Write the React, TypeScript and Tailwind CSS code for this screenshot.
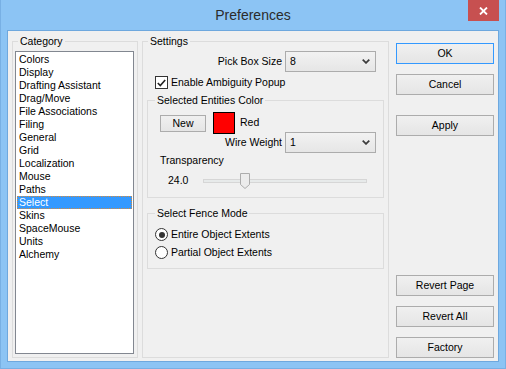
import React from 'react';

const categories = [
  'Colors', 'Display', 'Drafting Assistant', 'Drag/Move', 'File Associations', 'Filing',
  'General', 'Grid', 'Localization', 'Mouse', 'Paths', 'Select', 'Skins', 'SpaceMouse',
  'Units', 'Alchemy',
];

function Combo({ value }: { value: string }) {
  return (
    <div className="flex h-[21px] w-[91px] items-center justify-between border border-[#acacac] bg-linear-to-b from-[#f2f2f2] to-[#e6e6e6] pl-[4px] pr-[5px]">
      <span>{value}</span>
      <svg width="8" height="5" viewBox="0 0 8 5">
        <path d="M0.7 0.6 L4 3.9 L7.3 0.6" fill="none" stroke="#3c3c3c" strokeWidth="1.7" />
      </svg>
    </div>
  );
}

function Btn({ label, focused = false, className = '' }: { label: string; focused?: boolean; className?: string }) {
  return (
    <button
      className={`h-[21px] w-[98px] border bg-linear-to-b from-[#f0f0f0] to-[#e5e5e5] text-black ${
        focused ? 'border-[#3399ff]' : 'border-[#acacac]'
      } ${className}`}
    >
      {label}
    </button>
  );
}

function Radio({ checked }: { checked: boolean }) {
  return (
    <span className="flex h-[13px] w-[13px] items-center justify-center rounded-full border border-[#333] bg-white">
      {checked && <span className="h-[6px] w-[6px] rounded-full bg-[#333]" />}
    </span>
  );
}

export default function App() {
  return (
    <div className="flex h-[369px] w-[506px] flex-col border-x border-b border-[#78b0e4] bg-[#8cc4f4] font-['Liberation_Sans',Arial,sans-serif] text-[10.5px] text-black">
      {/* title bar */}
      <header className="grid h-[30px] shrink-0 grid-cols-[1fr_auto_1fr]">
        <div />
        <div className="pt-[6px] text-[14px] leading-[18px] text-[#2b2b2b]">Preferences</div>
        <div className="flex justify-end pr-[6px]">
          <div className="flex h-[21px] w-[31px] items-center justify-center bg-[#c75050]">
            <svg width="9" height="8" viewBox="0 0 9 8">
              <path d="M1 0.5 L8 7.5 M8 0.5 L1 7.5" stroke="#fff" strokeWidth="1.8" />
            </svg>
          </div>
        </div>
      </header>

      {/* client */}
      <div className="mx-[6px] flex h-[332px] border border-[#6ea8de] bg-[#f0f0f0] pt-[3px] pl-[4px]">
        {/* category */}
        <fieldset className="h-[324px] w-[126px] border border-[#dcdcdc]">
          <legend className="ml-[5px] px-[2px] leading-[14px]">Category</legend>
          <div className="mt-[3px] ml-[2px] h-[303px] w-[119px] border border-[#828790] bg-white p-[1px]">
            {categories.map(c => (
              <div
                key={c}
                className={`h-[13px] border pl-[1px] leading-[11px] whitespace-nowrap ${
                  c === 'Select'
                    ? 'border-dotted border-[#d58a3c] bg-[#3399ff] text-white'
                    : 'border-transparent'
                }`}
              >
                {c}
              </div>
            ))}
          </div>
        </fieldset>

        {/* settings */}
        <fieldset className="ml-[4px] h-[324px] w-[247px] border border-[#dcdcdc]">
          <legend className="ml-[5px] px-[2px] leading-[14px]">Settings</legend>
          <div className="flex flex-col px-[4px]">
            <div className="mt-[3px] flex h-[21px] items-center justify-end gap-[3px] pr-[8px]">
              <span>Pick Box Size</span>
              <Combo value="8" />
            </div>

            <div className="mt-[4px] flex h-[13px] items-center gap-[3px] pl-[8px]">
              <span className="flex h-[13px] w-[13px] items-center justify-center border border-[#333] bg-white">
                <svg width="9" height="8" viewBox="0 0 9 8">
                  <path d="M0.8 4 L3.3 6.6 L8.2 1" fill="none" stroke="#222" strokeWidth="1.6" />
                </svg>
              </span>
              <span>Enable Ambiguity Popup</span>
            </div>

            <fieldset className="mt-[4px] h-[105px] border border-[#dcdcdc]">
              <legend className="ml-[7px] px-[2px] leading-[14px]">Selected Entities Color</legend>
              <div className="flex flex-col">
                <div className="mt-[5px] flex h-[22px] items-center pl-[12px]">
                  <button className="h-[17px] w-[46px] border border-[#acacac] bg-linear-to-b from-[#f0f0f0] to-[#e5e5e5]">
                    New
                  </button>
                  <span className="ml-[7px] h-[22px] w-[22px] border border-black bg-[#ff0000]" />
                  <span className="ml-[5px]">Red</span>
                </div>
                <div className="mt-[-2px] flex h-[21px] items-center justify-end gap-[3px] pr-[7px]">
                  <span>Wire Weight</span>
                  <Combo value="1" />
                </div>
                <div className="mt-[1px] pl-[12px] leading-[13px]">Transparency</div>
                <div className="mt-[6px] flex h-[16px] items-center pl-[20px]">
                  <span>24.0</span>
                  <div className="relative ml-[15px] flex h-[16px] w-[164px] items-center">
                    <div className="h-[4px] w-full border border-[#d6d6d6] bg-[#e7eaea]" />
                    <svg className="absolute top-0 left-[37px]" width="10" height="16" viewBox="0 0 10 16">
                      <path d="M0.5 0.5 H9.5 V11.5 L5 15.5 L0.5 11.5 Z" fill="#ececec" stroke="#acacac" />
                    </svg>
                  </div>
                </div>
              </div>
            </fieldset>

            <fieldset className="mt-[8px] h-[63px] border border-[#dcdcdc]">
              <legend className="ml-[7px] px-[2px] leading-[14px]">Select Fence Mode</legend>
              <div className="flex flex-col">
                <label className="mt-[8px] flex h-[13px] items-center gap-[3px] pl-[7px]">
                  <Radio checked />
                  <span>Entire Object Extents</span>
                </label>
                <label className="mt-[5px] flex h-[13px] items-center gap-[3px] pl-[7px]">
                  <Radio checked={false} />
                  <span>Partial Object Extents</span>
                </label>
              </div>
            </fieldset>
          </div>
        </fieldset>

        {/* buttons */}
        <div className="mt-[9px] ml-[7px] flex h-[315px] w-[98px] flex-col">
          <Btn label="OK" focused />
          <Btn label="Cancel" className="mt-[10px]" />
          <Btn label="Apply" className="mt-[20px]" />
          <Btn label="Revert Page" className="mt-auto" />
          <Btn label="Revert All" className="mt-[10px]" />
          <Btn label="Factory" className="mt-[10px]" />
        </div>
      </div>
    </div>
  );
}
